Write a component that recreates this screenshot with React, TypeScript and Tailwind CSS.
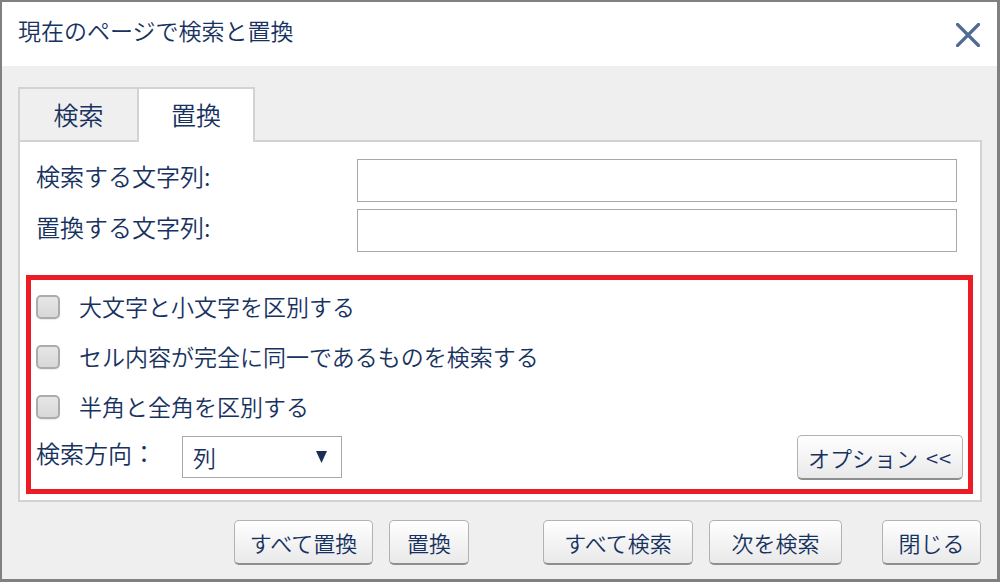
import React from "react";

const font = { fontFamily: '"Noto Sans CJK JP", "Noto Sans", sans-serif' };

function Btn({ w, children }: { w: string; children: React.ReactNode }) {
  return (
    <button
      className={`${w} h-[45px] rounded-[5px] border border-[#b2b2b2] border-b-2 border-b-[#8e8e8e] bg-linear-to-b from-white to-[#e9e9e9] text-[22px] leading-none text-[#17325f] flex items-center justify-center font-[350]`}
    >
      {children}
    </button>
  );
}

function Check({ label }: { label: string }) {
  return (
    <div className="h-[50px] flex items-center pl-[5px]">
      <div className="w-[24px] h-[24px] rounded-[5px] border-2 border-[#acacac] bg-linear-to-b from-[#e6e6e6] to-[#d8d8d8] shadow-[0_1px_1px_rgba(0,0,0,0.08)]" />
      <span className="ml-[19px] text-[23px] leading-none text-[#17325f] font-[350] -mt-[2px]">{label}</span>
    </div>
  );
}

export default function App() {
  return (
    <div
      style={font}
      className="w-[1000px] h-[582px] border-2 border-r-[3px] border-b-[3px] border-[#808080] bg-[#efefef] flex flex-col"
    >
      <div className="h-[64px] bg-white flex items-center justify-between pl-[16px] pr-[17px] shrink-0">
        <span className="text-[23px] leading-none text-[#17325f] font-[350] -mt-[8px]">現在のページで検索と置換</span>
        <svg width="24" height="24" viewBox="0 0 24 24" className="mt-[1px]">
          <path d="M1.5 1.5 L22.5 22.5 M22.5 1.5 L1.5 22.5" stroke="#4f6a94" strokeWidth="3.3" strokeLinecap="square" />
        </svg>
      </div>
      <div className="flex-1 flex flex-col pl-[16px] pr-[15px] pt-[19px]">
        <div className="flex items-end h-[55px]">
          <div className="w-[119px] h-[53px] border-t-2 border-l-2 border-[#d3d3d3] bg-[#efefef] flex items-center justify-center text-[25px] leading-none text-[#17325f] font-[350]">
            検索
          </div>
          <div className="relative z-10 -mb-[2px] w-[118px] h-[55px] border-2 border-b-0 border-[#d3d3d3] bg-white flex items-center justify-center text-[25px] leading-none text-[#17325f] pb-[2px] font-[350]">
            置換
          </div>
        </div>
        <div className="h-[362px] border-2 border-[#d3d3d3] bg-white flex flex-col pt-[17px]">
          <div className="flex items-center h-[43px] pl-[16px] pr-[23px]">
            <span className="text-[24px] leading-none text-[#17325f] font-[350] -mt-[10px]">検索する文字列:</span>
            <div className="ml-auto w-[600px] h-[43px] border border-[#a9a9a9]" />
          </div>
          <div className="flex items-center h-[43px] pl-[16px] pr-[23px] mt-[7px]">
            <span className="text-[24px] leading-none text-[#17325f] font-[350] -mt-[8px]">置換する文字列:</span>
            <div className="ml-auto w-[600px] h-[43px] border border-[#a9a9a9]" />
          </div>
          <div className="mt-[23px] ml-[6px] mr-[7px] h-[219px] border-[5px] border-[#ed1c24] pt-[2px] flex flex-col">
            <Check label="大文字と小文字を区別する" />
            <Check label="セル内容が完全に同一であるものを検索する" />
            <Check label="半角と全角を区別する" />
            <div className="h-[50px] flex items-center pl-[5px] pr-[5px]">
              <span className="text-[24px] leading-none text-[#17325f] font-[350] -mt-[9px]">検索方向：</span>
              <div className="ml-[26px] w-[160px] h-[42px] border border-[#a9a9a9] flex items-center pl-[10px] pr-[14px]">
                <span className="text-[23px] leading-none text-[#17325f] font-[350]">列</span>
                <svg width="11" height="12" viewBox="0 0 11 12" className="ml-auto">
                  <path d="M0 0 H11 L5.5 12 Z" fill="#1b2f55" />
                </svg>
              </div>
              <div className="ml-auto">
                <Btn w="w-[166px]">
                  <span>オプション</span>
                  <span className="ml-[8px] tracking-[1px]">&lt;&lt;</span>
                </Btn>
              </div>
            </div>
          </div>
        </div>
        <div className="flex items-center h-[45px] mt-[18px] pr-[1px] justify-end">
          <Btn w="w-[139px]">すべて置換</Btn>
          <div className="ml-[16px]">
            <Btn w="w-[80px]">置換</Btn>
          </div>
          <div className="ml-[74px]">
            <Btn w="w-[150px]">すべて検索</Btn>
          </div>
          <div className="ml-[16px]">
            <Btn w="w-[133px]">次を検索</Btn>
          </div>
          <div className="ml-[40px]">
            <Btn w="w-[99px]">閉じる</Btn>
          </div>
        </div>
      </div>
    </div>
  );
}
